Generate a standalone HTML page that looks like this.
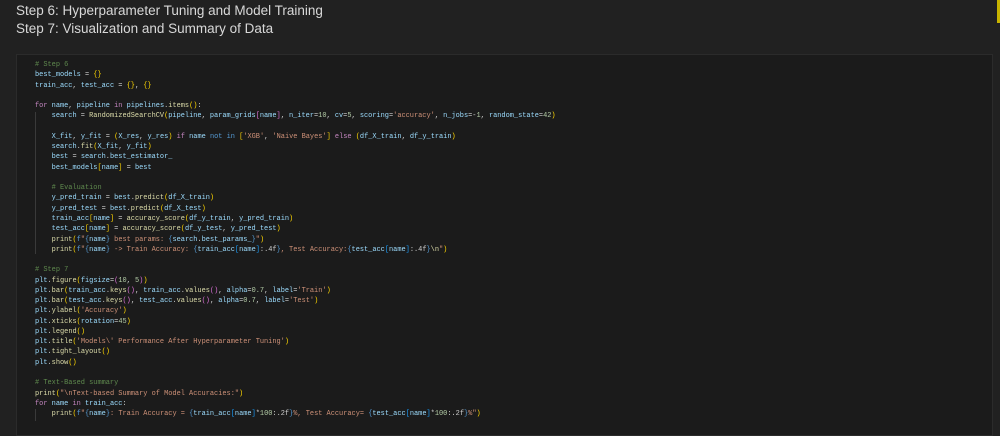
<!DOCTYPE html>
<html><head><meta charset="utf-8"><style>
html,body{margin:0;padding:0;background:#212121;width:1000px;height:423px;overflow:hidden;}
.h{position:absolute;left:16px;font-family:"Liberation Sans",sans-serif;font-size:13.5px;color:#d8d8d8;}
.cell{position:absolute;left:16px;top:54px;width:975px;height:380px;background:#1b1b1b;border:1px solid #2b2b2b;}
pre{position:absolute;left:35px;top:60px;margin:0;font-family:"Liberation Mono",monospace;font-size:6.95px;line-height:10.26px;color:#d0d0d0;}
.c{color:#5f8a4e}.k{color:#c586c0}.v{color:#9cdcfe}.f{color:#dcdcaa}.s{color:#ce9178}.n{color:#b5cea8}.y{color:#ffd700}.p{color:#da70d6}.b{color:#179fff}.kb{color:#569cd6}
.g{position:absolute;width:1px;background:#3a3a3a;}
</style></head><body>
<div class="h" style="top:3px">Step 6: Hyperparameter Tuning and Model Training</div>
<div class="h" style="top:21px">Step 7: Visualization and Summary of Data</div>
<div style="position:absolute;left:997px;top:0;width:3px;height:23px;background:#c8b400"></div>
<div class="cell"></div>
<div class="g" style="left:35px;top:112px;height:142px"></div>
<div class="g" style="left:35px;top:409px;height:12px"></div>
<pre><span class="c"># Step 6</span>
<span class="v">best_models</span> = <span class="y">{}</span>
<span class="v">train_acc</span>, <span class="v">test_acc</span> = <span class="y">{}</span>, <span class="y">{}</span>

<span class="k">for</span> <span class="v">name</span>, <span class="v">pipeline</span> <span class="k">in</span> <span class="v">pipelines</span>.<span class="f">items</span><span class="y">()</span>:
    <span class="v">search</span> = <span class="f">RandomizedSearchCV</span><span class="y">(</span><span class="v">pipeline</span>, <span class="v">param_grids</span><span class="p">[</span><span class="v">name</span><span class="p">]</span>, <span class="v">n_iter</span>=<span class="n">10</span>, <span class="v">cv</span>=<span class="n">5</span>, <span class="v">scoring</span>=<span class="s">'accuracy'</span>, <span class="v">n_jobs</span>=-<span class="n">1</span>, <span class="v">random_state</span>=<span class="n">42</span><span class="y">)</span>

    <span class="v">X_fit</span>, <span class="v">y_fit</span> = <span class="y">(</span><span class="v">X_res</span>, <span class="v">y_res</span><span class="y">)</span> <span class="k">if</span> <span class="v">name</span> <span class="kb">not in</span> <span class="y">[</span><span class="s">'XGB'</span>, <span class="s">'Naive Bayes'</span><span class="y">]</span> <span class="k">else</span> <span class="y">(</span><span class="v">df_X_train</span>, <span class="v">df_y_train</span><span class="y">)</span>
    <span class="v">search</span>.<span class="f">fit</span><span class="y">(</span><span class="v">X_fit</span>, <span class="v">y_fit</span><span class="y">)</span>
    <span class="v">best</span> = <span class="v">search</span>.<span class="v">best_estimator_</span>
    <span class="v">best_models</span><span class="y">[</span><span class="v">name</span><span class="y">]</span> = <span class="v">best</span>

    <span class="c"># Evaluation</span>
    <span class="v">y_pred_train</span> = <span class="v">best</span>.<span class="f">predict</span><span class="y">(</span><span class="v">df_X_train</span><span class="y">)</span>
    <span class="v">y_pred_test</span> = <span class="v">best</span>.<span class="f">predict</span><span class="y">(</span><span class="v">df_X_test</span><span class="y">)</span>
    <span class="v">train_acc</span><span class="y">[</span><span class="v">name</span><span class="y">]</span> = <span class="f">accuracy_score</span><span class="y">(</span><span class="v">df_y_train</span>, <span class="v">y_pred_train</span><span class="y">)</span>
    <span class="v">test_acc</span><span class="y">[</span><span class="v">name</span><span class="y">]</span> = <span class="f">accuracy_score</span><span class="y">(</span><span class="v">df_y_test</span>, <span class="v">y_pred_test</span><span class="y">)</span>
    <span class="f">print</span><span class="y">(</span><span class="kb">f</span><span class="s">"</span><span class="kb">{</span><span class="v">name</span><span class="kb">}</span><span class="s"> best params: </span><span class="kb">{</span><span class="v">search</span>.<span class="v">best_params_</span><span class="kb">}</span><span class="s">"</span><span class="y">)</span>
    <span class="f">print</span><span class="y">(</span><span class="kb">f</span><span class="s">"</span><span class="kb">{</span><span class="v">name</span><span class="kb">}</span><span class="s"> -&gt; Train Accuracy: </span><span class="kb">{</span><span class="v">train_acc</span><span class="b">[</span><span class="v">name</span><span class="b">]</span>:.4f<span class="kb">}</span><span class="s">, Test Accuracy:</span><span class="kb">{</span><span class="v">test_acc</span><span class="b">[</span><span class="v">name</span><span class="b">]</span>:.4f<span class="kb">}</span><span class="f">\n</span><span class="s">"</span><span class="y">)</span>

<span class="c"># Step 7</span>
<span class="v">plt</span>.<span class="f">figure</span><span class="y">(</span><span class="v">figsize</span>=<span class="p">(</span><span class="n">10</span>, <span class="n">5</span><span class="p">)</span><span class="y">)</span>
<span class="v">plt</span>.<span class="f">bar</span><span class="y">(</span><span class="v">train_acc</span>.<span class="f">keys</span><span class="p">()</span>, <span class="v">train_acc</span>.<span class="f">values</span><span class="p">()</span>, <span class="v">alpha</span>=<span class="n">0.7</span>, <span class="v">label</span>=<span class="s">'Train'</span><span class="y">)</span>
<span class="v">plt</span>.<span class="f">bar</span><span class="y">(</span><span class="v">test_acc</span>.<span class="f">keys</span><span class="p">()</span>, <span class="v">test_acc</span>.<span class="f">values</span><span class="p">()</span>, <span class="v">alpha</span>=<span class="n">0.7</span>, <span class="v">label</span>=<span class="s">'Test'</span><span class="y">)</span>
<span class="v">plt</span>.<span class="f">ylabel</span><span class="y">(</span><span class="s">'Accuracy'</span><span class="y">)</span>
<span class="v">plt</span>.<span class="f">xticks</span><span class="y">(</span><span class="v">rotation</span>=<span class="n">45</span><span class="y">)</span>
<span class="v">plt</span>.<span class="f">legend</span><span class="y">()</span>
<span class="v">plt</span>.<span class="f">title</span><span class="y">(</span><span class="s">'Models\' Performance After Hyperparameter Tuning'</span><span class="y">)</span>
<span class="v">plt</span>.<span class="f">tight_layout</span><span class="y">()</span>
<span class="v">plt</span>.<span class="f">show</span><span class="y">()</span>

<span class="c"># Text-Based summary</span>
<span class="f">print</span><span class="y">(</span><span class="s">"\nText-based Summary of Model Accuracies:"</span><span class="y">)</span>
<span class="k">for</span> <span class="v">name</span> <span class="k">in</span> <span class="v">train_acc</span>:
    <span class="f">print</span><span class="y">(</span><span class="kb">f</span><span class="s">"</span><span class="kb">{</span><span class="v">name</span><span class="kb">}</span><span class="s">: Train Accuracy = </span><span class="kb">{</span><span class="v">train_acc</span><span class="b">[</span><span class="v">name</span><span class="b">]</span>*<span class="n">100</span>:.2f<span class="kb">}</span><span class="s">%, Test Accuracy= </span><span class="kb">{</span><span class="v">test_acc</span><span class="b">[</span><span class="v">name</span><span class="b">]</span>*<span class="n">100</span>:.2f<span class="kb">}</span><span class="s">%"</span><span class="y">)</span>
</pre>
</body></html>
